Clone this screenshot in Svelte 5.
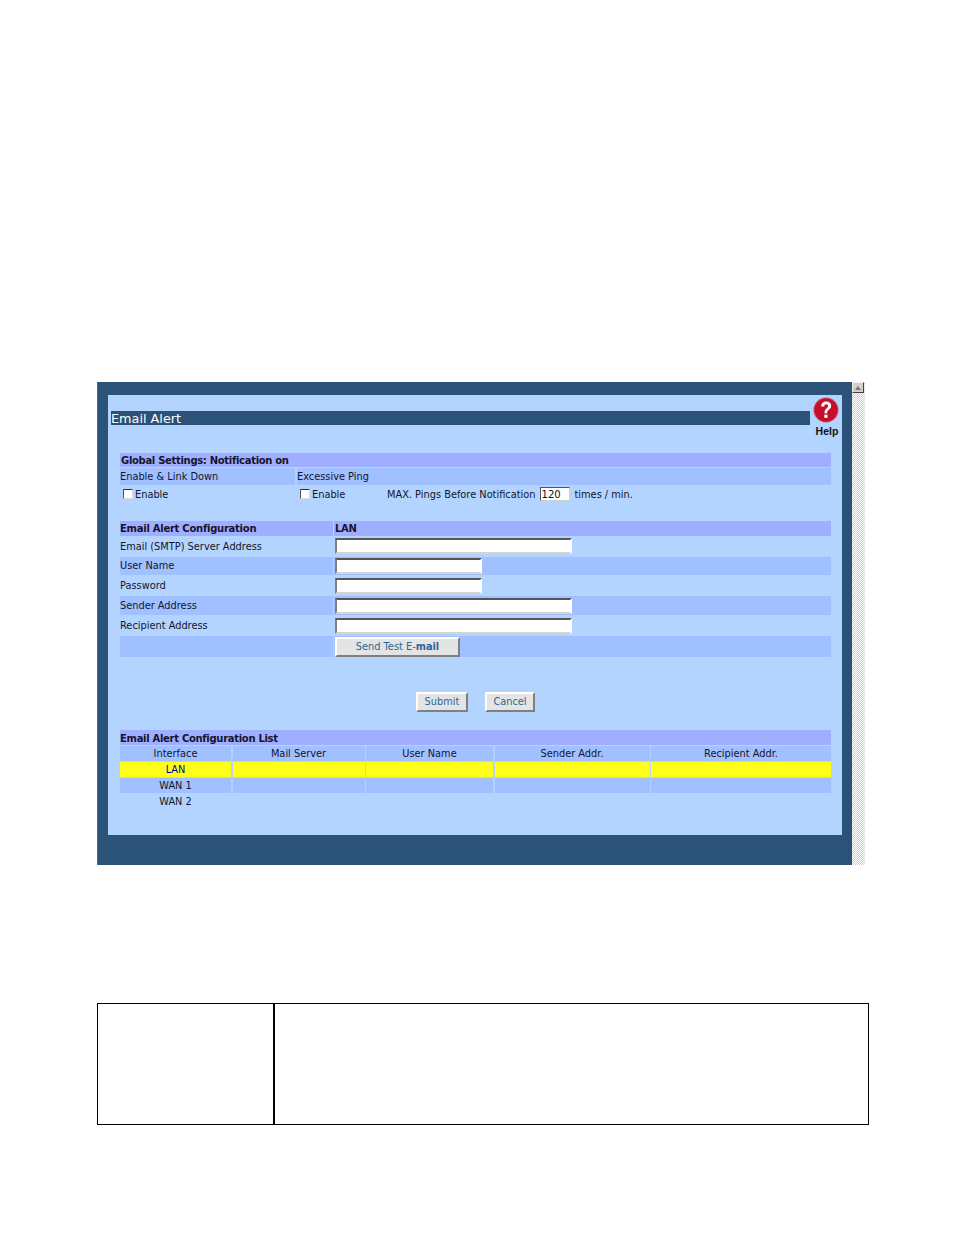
<script>
  const columns = ['Interface', 'Mail Server', 'User Name', 'Sender Addr.', 'Recipient Addr.'];
  const rows = [
    { name: 'LAN', cls: 'active' },
    { name: 'WAN 1', cls: 'alt' },
    { name: 'WAN 2', cls: 'last' }
  ];
  const fields = [
    { label: 'Email (SMTP) Server Address', size: 'long', alt: false },
    { label: 'User Name', size: 'short', alt: true },
    { label: 'Password', size: 'short', alt: false },
    { label: 'Sender Address', size: 'long', alt: true },
    { label: 'Recipient Address', size: 'long', alt: false }
  ];
</script>

<div class="page">
  <div class="shot">
    <div class="frame">
      <div class="panel">
        <header class="top">
          <h1>Email Alert</h1>
          <div class="help">
            <svg width="26" height="26" viewBox="0 0 26 26" aria-hidden="true">
              <circle cx="13" cy="13" r="12.5" fill="#d9485f" />
              <circle cx="13" cy="13" r="11.5" fill="#c40f2b" />
              <path d="M8.2 9.4 C8.2 6.2 10.4 4.4 13.2 4.4 C16.2 4.4 18.2 6.2 18.2 8.8 C18.2 11 16.9 12.1 15.5 13.1 C14.5 13.9 14.3 14.6 14.3 16.2 H11.5 C11.5 14 12 12.8 13.3 11.7 C14.5 10.7 15.1 10.1 15.1 9.1 C15.1 8 14.4 7.3 13.2 7.3 C12 7.3 11.3 8.1 11.3 9.6 Z" fill="#fff" />
              <rect x="11.3" y="17.6" width="3.2" height="3.2" fill="#fff" />
            </svg>
            <span>Help</span>
          </div>
        </header>

        <div class="body">
          <div class="bar">Global Settings: Notification on</div>
          <div class="subhead">
            <div>Enable &amp; Link Down</div>
            <div>Excessive Ping</div>
          </div>
          <div class="options">
            <label class="opt first"><input type="checkbox" />Enable</label>
            <label class="opt second"><input type="checkbox" />Enable</label>
            <span class="max">MAX. Pings Before Notification</span>
            <input class="pings" type="text" value="120" />
            <span class="times">times / min.</span>
          </div>

          <div class="confighead">
            <div>Email Alert Configuration</div>
            <div>LAN</div>
          </div>
          {#each fields as f, i}
            <div class="field row{i}" class:alt={f.alt}>
              <div class="lab">{f.label}</div>
              <div class="val"><input class={f.size} type="text" /></div>
            </div>
          {/each}
          <div class="field alt sendrow">
            <div class="lab"></div>
            <div class="val"><button class="btn send">Send Test E-<b>mail</b></button></div>
          </div>

          <div class="actions">
            <button class="btn submit">Submit</button>
            <button class="btn cancel">Cancel</button>
          </div>

          <div class="bar listbar">Email Alert Configuration List</div>
          <div class="list">
            <div class="lrow head">
              {#each columns as c}<div>{c}</div>{/each}
            </div>
            {#each rows as r}
              <div class="lrow {r.cls}">
                <div>{r.name}</div><div></div><div></div><div></div><div></div>
              </div>
            {/each}
          </div>
        </div>
      </div>
    </div>
    <div class="sb"><div class="sbup"><i></i></div></div>
  </div>

  <div class="desc">
    <div class="c1"></div>
    <div class="c2"></div>
  </div>
</div>

<style>
  :global(body) { margin: 0; background: #fff; }
  .page {
    height: 1235px;
    box-sizing: border-box;
    padding: 382px 0 0 97px;
    font: 9.8px/14px "DejaVu Sans", sans-serif;
    color: #14142a;
    overflow: hidden;
  }
  .shot { display: flex; width: 768px; height: 483px; }
  .frame {
    flex: 1;
    background: #2b5278;
    border-left: 1px solid #666;
    padding: 13px 10px 30px 10px;
  }
  .panel { height: 440px; background: #b2d4ff; }
  .top { display: flex; height: 58px; }
  h1 {
    margin: 16px 0 0 3px;
    width: 699px;
    height: 14px;
    background: #2b5278;
    color: #fff;
    font: 400 12.8px/15px "DejaVu Sans", sans-serif;
    overflow: hidden;
    white-space: nowrap;
  }
  .help {
    margin: 2px 0 0 3px;
    width: 26px;
    display: flex;
    flex-direction: column;
    align-items: center;
  }
  .help svg { display: block; flex: none; }
  .help span {
    font: 700 10.5px/12px "Liberation Sans", sans-serif;
    color: #111;
    margin-top: 2px;
    margin-left: 2px;
  }
  .body { margin-left: 12px; width: 711px; }
  .bar {
    height: 14px;
    background: #a0aeff;
    font-weight: 700;
    font-size: 10px;
    letter-spacing: -0.31px;
    line-height: 16px;
    padding-left: 1px;
  }
  .subhead {
    display: grid;
    grid-template-columns: 175px 1fr;
    gap: 2px;
    height: 15px;
    margin-top: 1px;
    line-height: 17px;
  }
  .subhead div { background: #a0c0ff; }
  .options { display: flex; align-items: center; height: 22px; padding-top: 1px; box-sizing: border-box; }
  .opt { display: flex; align-items: center; white-space: nowrap; }
  .opt input {
    appearance: none;
    width: 10px;
    height: 10px;
    margin: 0 2px 2px 0;
    box-sizing: border-box;
    background: #fff;
    border: 1px solid;
    border-color: #333 #ddd #ddd #555;
  }
  .first { margin-left: 3px; width: 174px; }
  .second { width: 87px; padding-left: 3px; }
  .max { white-space: nowrap; }
  .pings {
    width: 30px;
    height: 14px;
    margin: -1px 0 0 4px;
    padding: 0 0 0 1px;
    box-sizing: border-box;
    border: 1px solid;
    border-color: #555 #d4d0c8 #d4d0c8 #555;
    background: #fff;
    font: 10px/12px "DejaVu Sans", sans-serif;
    color: #111;
  }
  .times { margin-left: 5px; white-space: nowrap; }
  .confighead {
    display: grid;
    grid-template-columns: 213px 1fr;
    gap: 1px;
    height: 15px;
    margin-top: 16px;
    font-weight: 700;
    font-size: 10px;
    letter-spacing: -0.26px;
    line-height: 15px;
  }
  .confighead div { background: #a0aeff; }
  .confighead div:last-child { padding-left: 1px; }
  .field {
    display: grid;
    grid-template-columns: 213px 1fr;
    gap: 1px;
    height: 19px;
    margin-top: 1px;
  }
  .row0 { height: 20px; margin-top: 0; }
  .row0 .lab { padding-top: 1px; }
  .row1 { height: 18px; }
  .field.alt .lab, .field.alt .val { background: #a0c0ff; }
  .lab { display: flex; align-items: center; }
  .val { padding-left: 1px; display: flex; align-items: center; }
  .val input {
    box-sizing: border-box;
    height: 16px;
    padding: 0;
    background: #fff;
    border: 2px solid;
    border-color: #555 #fff #d8d4cc #808080;
  }
  .long { width: 237px; }
  .short { width: 147px; }
  .sendrow { height: 21px; }
  .btn {
    display: block;
    box-sizing: border-box;
    padding: 0;
    background: #e4e4e4;
    border: 2px solid;
    border-color: #fff #808080 #808080 #fff;
    color: #2b6497;
    font: 9.8px/14px "DejaVu Sans", sans-serif;
  }
  .send { width: 125px; height: 20px; }
  .actions {
    display: flex;
    height: 20px;
    margin: 35px 0 0 296px;
    gap: 17px;
  }
  .submit { width: 52px; height: 20px; }
  .cancel { width: 50px; height: 20px; }
  .listbar { margin-top: 18px; height: 15px; padding-left: 0; line-height: 17px; letter-spacing: -0.3px; }
  .list { margin-top: 1px; }
  .lrow {
    display: grid;
    grid-template-columns: 111px 132px 127px 155px 180px;
    gap: 1.5px;
    height: 15px;
    margin-bottom: 1px;
    text-align: center;
    line-height: 15px;
  }
  .head div, .alt div { background: #a0c0ff; }
  .active div { background: #ffff1a; color: #0000a0; }
  .lrow.active { height: 14px; margin-bottom: 2px; }
  .lrow.alt { height: 14px; }
  .lrow.last { line-height: 17px; }
  .sb {
    width: 13px;
    background: repeating-conic-gradient(#d4d0c8 0 25%, #fff 0 50%) 0 0 / 2px 2px;
  }
  .sbup {
    box-sizing: border-box;
    width: 12px;
    height: 11px;
    background: #d4d0c8;
    border: 1px solid;
    border-color: #eee #404040 #404040 #eee;
    display: flex;
    align-items: center;
    justify-content: center;
  }
  .sbup i {
    width: 0;
    height: 0;
    border: 3px solid transparent;
    border-top: 0;
    border-bottom: 4px solid #777;
  }
  .desc {
    display: flex;
    box-sizing: border-box;
    width: 772px;
    height: 122px;
    margin-top: 138px;
    border: 1px solid #000;
  }
  .c1 { width: 175px; border-right: 2px solid #000; }
  .c2 { flex: 1; }
</style>
